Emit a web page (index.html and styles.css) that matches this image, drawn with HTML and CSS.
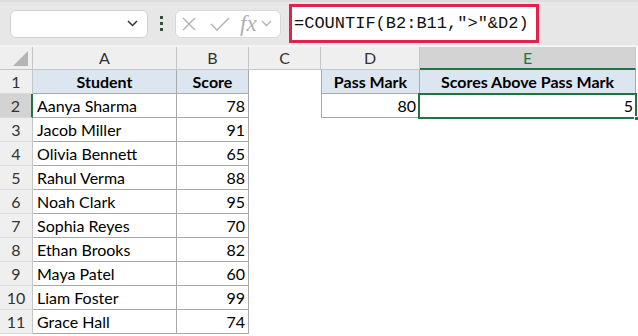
FILE: index.html
```html
<!DOCTYPE html>
<html lang="en">
<head>
	<meta charset="utf-8">
	<title>COUNTIF</title>
	<link rel="stylesheet" href="styles.css">
</head>
<body>
	<div class="toolbar">
		<div class="namebox">
			<svg width="11" height="7" viewBox="0 0 11 7"><polyline points="1,1 5.5,5.5 10,1" fill="none" stroke="#333" stroke-width="1.5"/></svg>
		</div>
		<div class="dots"><span></span><span></span><span></span></div>
		<div class="fnbox">
			<svg width="14" height="14" viewBox="0 0 14 14"><path d="M1 1 L13 13 M13 1 L1 13" stroke="#b0b0b0" stroke-width="1.3" fill="none"/></svg>
			<svg width="20" height="14" viewBox="0 0 20 14"><polyline points="1,7 7,13 19,1" stroke="#b0b0b0" stroke-width="1.3" fill="none"/></svg>
			<span class="fx">fx</span>
			<svg width="11" height="7" viewBox="0 0 11 7"><polyline points="1,1 5.5,5.5 10,1" fill="none" stroke="#b0b0b0" stroke-width="1.3"/></svg>
		</div>
		<div class="formula">
			<div class="highlight">=COUNTIF(B2:B11,"&gt;"&amp;D2)</div>
		</div>
	</div>
	<div class="gap"></div>
	<div class="sheet">
		<div class="corner"></div>
		<div class="colhead">A</div>
		<div class="colhead">B</div>
		<div class="colhead">C</div>
		<div class="colhead">D</div>
		<div class="colhead sel">E</div>
		<div class="colhead last"></div>

		<div class="rowhead">1</div>
		<div class="cell th">Student</div>
		<div class="cell th">Score</div>
		<div class="empty"></div>
		<div class="cell th dl">Pass Mark</div>
		<div class="cell th">Scores Above Pass Mark</div>
		<div class="empty"></div>

		<div class="rowhead sel">2</div>
		<div class="cell">Aanya Sharma</div>
		<div class="cell num">78</div>
		<div class="empty"></div>
		<div class="cell num dl">80</div>
		<div class="cell num active">5<span class="handle"></span></div>
		<div class="empty"></div>

		<div class="rowhead">3</div>
		<div class="cell">Jacob Miller</div>
		<div class="cell num">91</div>
		<div class="empty wide"></div>

		<div class="rowhead">4</div>
		<div class="cell">Olivia Bennett</div>
		<div class="cell num">65</div>
		<div class="empty wide"></div>

		<div class="rowhead">5</div>
		<div class="cell">Rahul Verma</div>
		<div class="cell num">88</div>
		<div class="empty wide"></div>

		<div class="rowhead">6</div>
		<div class="cell">Noah Clark</div>
		<div class="cell num">95</div>
		<div class="empty wide"></div>

		<div class="rowhead">7</div>
		<div class="cell">Sophia Reyes</div>
		<div class="cell num">70</div>
		<div class="empty wide"></div>

		<div class="rowhead">8</div>
		<div class="cell">Ethan Brooks</div>
		<div class="cell num">82</div>
		<div class="empty wide"></div>

		<div class="rowhead">9</div>
		<div class="cell">Maya Patel</div>
		<div class="cell num">60</div>
		<div class="empty wide"></div>

		<div class="rowhead">10</div>
		<div class="cell">Liam Foster</div>
		<div class="cell num">99</div>
		<div class="empty wide"></div>

		<div class="rowhead">11</div>
		<div class="cell">Grace Hall</div>
		<div class="cell num">74</div>
		<div class="empty wide"></div>
	</div>
</body>
</html>
```

FILE: styles.css
```css
* {
	box-sizing: border-box;
}
body {
	margin: 0;
	width: 638px;
	height: 336px;
	overflow: hidden;
	background: #fff;
	font-family: Lato, 'Liberation Sans', sans-serif;
}
.toolbar {
	height: 45px;
	background: #e7e7e7;
	border-top: 2px solid #dcdcdc;
	display: flex;
	align-items: center;
	padding-left: 10px;
}
.namebox {
	width: 138px;
	height: 28px;
	background: #fff;
	border: 1px solid #d2d2d2;
	border-radius: 6px;
	display: flex;
	align-items: center;
	justify-content: flex-end;
	padding-right: 9px;
}
.dots {
	width: 27px;
	display: flex;
	flex-direction: column;
	align-items: center;
	gap: 3px;
}
.dots span {
	width: 3px;
	height: 3px;
	background: #33503f;
}
.fnbox {
	width: 106px;
	height: 28px;
	background: #fff;
	border: 1px solid #d8d8d8;
	border-radius: 6px;
	display: flex;
	align-items: center;
	padding-left: 6px;
}
.fnbox svg:nth-child(2) {
	margin-left: 14px;
}
.fx {
	font-family: 'Liberation Serif', serif;
	font-style: italic;
	font-size: 23px;
	color: #b0b0b0;
	margin-left: 10px;
	margin-right: 4px;
	line-height: 1;
}
.formula {
	flex: 1;
	align-self: stretch;
	padding: 2px 0 2px 8px;
	display: flex;
}
.highlight {
	width: 250px;
	border: 3px solid #e2214f;
	background: #fff;
	font-family: 'Liberation Mono', monospace;
	font-size: 17px;
	color: #111;
	display: flex;
	align-items: center;
	padding-left: 2px;
}
.gap {
	height: 2px;
	background: #f4f4f4;
}
.sheet {
	display: grid;
	grid-template-columns: 33px 144px 72px 72px 99px 216px 2px;
	grid-template-rows: 23px;
	grid-auto-rows: 24px;
	font-size: 16px;
	color: #000;
}
.corner {
	background: #efefef;
	border-right: 1px solid #c6c6c6;
	border-bottom: 1px solid #c6c6c6;
	position: relative;
}
.corner::after {
	content: "";
	position: absolute;
	right: 4px;
	bottom: 3px;
	border-left: 15px solid transparent;
	border-bottom: 15px solid #b4b4b4;
}
.colhead {
	background: #efefef;
	border-right: 1px solid #c6c6c6;
	border-bottom: 1px solid #c6c6c6;
	text-align: center;
	font-size: 16px;
	line-height: 22px;
	color: #333;
}
.colhead.sel {
	background: #d3d3d3;
	border-bottom: 2px solid #217346;
	color: #217346;
}
.colhead.last {
	background: #fff;
	border: none;
}
.rowhead {
	background: #efefef;
	border-right: 1px solid #c6c6c6;
	border-bottom: 1px solid #dadada;
	text-align: center;
	font-size: 16px;
	line-height: 23px;
	color: #333;
}
.rowhead.sel {
	background: #d3d3d3;
	border-right: 2px solid #217346;
}
.cell {
	border-right: 1px solid #a9a9a9;
	border-bottom: 1px solid #a9a9a9;
	padding: 0 4px;
	line-height: 23px;
	white-space: nowrap;
}
.cell.th {
	background: #dce6f0;
	font-weight: bold;
	text-align: center;
}
.cell.num {
	text-align: right;
	padding-right: 3px;
}
.cell.dl {
	border-left: 1px solid #a9a9a9;
}
.cell.active {
	position: relative;
	border: none;
}
.cell.active::before {
	content: "";
	position: absolute;
	left: -2px;
	top: -1px;
	right: -1px;
	bottom: -1px;
	border: 2px solid #217346;
}
.handle {
	position: absolute;
	right: -3px;
	bottom: -3px;
	width: 5px;
	height: 5px;
	background: #217346;
	border: 1px solid #fff;
}
.empty.wide {
	grid-column: span 4;
}
```
